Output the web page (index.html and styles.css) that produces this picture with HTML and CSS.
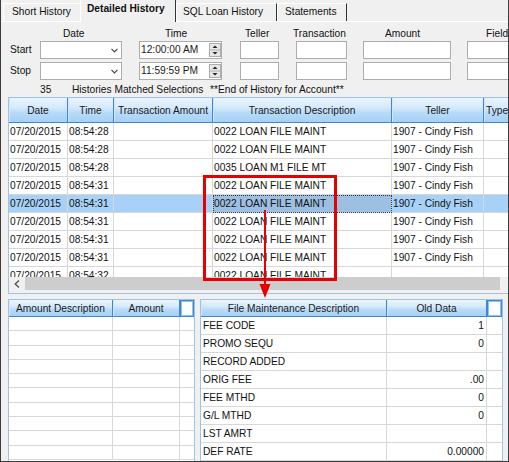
FILE: index.html
```html
<!DOCTYPE html>
<html>
<head>
<meta charset="utf-8">
<title>Detailed History</title>
<link rel="stylesheet" href="styles.css">
</head>
<body>
<div class="frame">
  <div class="tabs">
    <div class="tab tab-short">Short History</div>
    <div class="tab tab-active">Detailed History</div>
    <div class="tab tab-sql">SQL Loan History</div>
    <div class="tab tab-stmt">Statements</div>
  </div>
  <div class="page">
    <div class="filters">
      <div></div>
      <div class="flabel lbl-date">Date</div>
      <div class="flabel lbl-time">Time</div>
      <div class="flabel lbl-teller">Teller</div>
      <div class="flabel lbl-trans">Transaction</div>
      <div class="flabel lbl-amount">Amount</div>
      <div class="flabel lbl-field">Field</div>

      <div class="rlabel">Start</div>
      <div class="inp combo w-date"><svg class="chev" width="7" height="5" viewBox="0 0 7 5"><polyline points="0.5,0.8 3.5,3.8 6.5,0.8" fill="none" stroke="#444" stroke-width="1.2"/></svg></div>
      <div class="inp timebox w-time"><span class="tval">12:00:00 AM</span><svg class="spin" width="12" height="14" viewBox="0 0 12 14"><rect x="0.5" y="0.5" width="11" height="13" fill="#e6e6e6" stroke="#adadad"/><line x1="1" y1="7" x2="11" y2="7" stroke="#adadad"/><polygon points="3.5,5 8.5,5 6,2.5" fill="#222"/><polygon points="3.5,9 8.5,9 6,11.5" fill="#222"/></svg></div>
      <div class="inp w-teller"></div>
      <div class="inp w-trans"></div>
      <div class="inp w-amount"></div>
      <div class="inp w-field"></div>

      <div class="rlabel">Stop</div>
      <div class="inp combo w-date"><svg class="chev" width="7" height="5" viewBox="0 0 7 5"><polyline points="0.5,0.8 3.5,3.8 6.5,0.8" fill="none" stroke="#444" stroke-width="1.2"/></svg></div>
      <div class="inp timebox w-time"><span class="tval">11:59:59 PM</span><svg class="spin" width="12" height="14" viewBox="0 0 12 14"><rect x="0.5" y="0.5" width="11" height="13" fill="#e6e6e6" stroke="#adadad"/><line x1="1" y1="7" x2="11" y2="7" stroke="#adadad"/><polygon points="3.5,5 8.5,5 6,2.5" fill="#222"/><polygon points="3.5,9 8.5,9 6,11.5" fill="#222"/></svg></div>
      <div class="inp w-teller"></div>
      <div class="inp w-trans"></div>
      <div class="inp w-amount"></div>
      <div class="inp w-field"></div>
    </div>

    <div class="summary">
      <span class="count">35</span>
      <span class="matched">Histories Matched Selections</span>
      <span class="endmsg">**End of History for Account**</span>
    </div>

    <div class="mgrid">
      <div class="mhead">
        <div class="hc">Date</div>
        <div class="hc">Time</div>
        <div class="hc">Transaction Amount</div>
        <div class="hc">Transaction Description</div>
        <div class="hc">Teller</div>
        <div class="hc hc-left">Type</div>
      </div>
      <div class="mbody">
        <div class="mrow"><div>07/20/2015</div><div>08:54:28</div><div></div><div>0022 LOAN FILE MAINT</div><div>1907 - Cindy Fish</div><div></div></div>
        <div class="mrow"><div>07/20/2015</div><div>08:54:28</div><div></div><div>0022 LOAN FILE MAINT</div><div>1907 - Cindy Fish</div><div></div></div>
        <div class="mrow"><div>07/20/2015</div><div>08:54:28</div><div></div><div>0035 LOAN M1 FILE MT</div><div>1907 - Cindy Fish</div><div></div></div>
        <div class="mrow"><div>07/20/2015</div><div>08:54:31</div><div></div><div>0022 LOAN FILE MAINT</div><div>1907 - Cindy Fish</div><div></div></div>
        <div class="mrow sel"><div>07/20/2015</div><div>08:54:31</div><div></div><div class="focus">0022 LOAN FILE MAINT</div><div>1907 - Cindy Fish</div><div></div></div>
        <div class="mrow"><div>07/20/2015</div><div>08:54:31</div><div></div><div>0022 LOAN FILE MAINT</div><div>1907 - Cindy Fish</div><div></div></div>
        <div class="mrow"><div>07/20/2015</div><div>08:54:31</div><div></div><div>0022 LOAN FILE MAINT</div><div>1907 - Cindy Fish</div><div></div></div>
        <div class="mrow"><div>07/20/2015</div><div>08:54:31</div><div></div><div>0022 LOAN FILE MAINT</div><div>1907 - Cindy Fish</div><div></div></div>
        <div class="mrow"><div>07/20/2015</div><div>08:54:32</div><div></div><div>0022 LOAN FILE MAINT</div><div></div><div></div></div>
      </div>
      <div class="hscroll">
        <div class="sarrow"><svg width="6" height="8" viewBox="0 0 6 8"><polyline points="5,0.5 1.2,4 5,7.5" fill="none" stroke="#555" stroke-width="1.4"/></svg></div>
        <div class="thumb"></div>
      </div>
    </div>

    <div class="bottom">
      <div class="bgrid lgrid">
        <div class="bhead">
          <div class="hc">Amount Description</div>
          <div class="hc">Amount</div>
          <div class="hsmall"></div>
        </div>
        <div class="lrow"><div></div><div></div><div></div></div>
        <div class="lrow"><div></div><div></div><div></div></div>
        <div class="lrow"><div></div><div></div><div></div></div>
        <div class="lrow"><div></div><div></div><div></div></div>
        <div class="lrow"><div></div><div></div><div></div></div>
        <div class="lrow"><div></div><div></div><div></div></div>
        <div class="lrow"><div></div><div></div><div></div></div>
        <div class="lrow"><div></div><div></div><div></div></div>
        <div class="lrow"><div></div><div></div><div></div></div>
        <div class="lrow"><div></div><div></div><div></div></div>
      </div>
      <div class="bgrid rgrid">
        <div class="bhead">
          <div class="hc">File Maintenance Description</div>
          <div class="hc">Old Data</div>
          <div class="hsmall"></div>
        </div>
        <div class="rrow"><div>FEE CODE</div><div class="num">1</div><div></div></div>
        <div class="rrow"><div>PROMO SEQU</div><div class="num">0</div><div></div></div>
        <div class="rrow"><div>RECORD ADDED</div><div class="num"></div><div></div></div>
        <div class="rrow"><div>ORIG FEE</div><div class="num">.00</div><div></div></div>
        <div class="rrow"><div>FEE MTHD</div><div class="num">0</div><div></div></div>
        <div class="rrow"><div>G/L MTHD</div><div class="num">0</div><div></div></div>
        <div class="rrow"><div>LST AMRT</div><div class="num"></div><div></div></div>
        <div class="rrow"><div>DEF RATE</div><div class="num">0.00000</div><div></div></div>
      </div>
    </div>
  </div>

  <div class="redbox"></div>
  <svg class="arrow" width="13" height="89" viewBox="0 0 13 89"><line x1="6" y1="0" x2="6" y2="76" stroke="#e60000" stroke-width="2"/><polygon points="0.5,74 11.5,74 6,88" fill="#e60000"/></svg>
</div>
</body>
</html>
```

FILE: styles.css
```css
* { box-sizing: border-box; }
html, body { margin: 0; padding: 0; }
body {
  width: 509px;
  height: 462px;
  overflow: hidden;
  background: #f0f0f0;
  font-family: "Liberation Sans", Arial, sans-serif;
  font-size: 10.2px;
  color: #111;
}
.frame {
  position: relative;
  width: 509px;
  height: 462px;
  border-left: 1px solid #3c3c3c;
  border-right: 1px solid #3c3c3c;
  border-bottom: 1px solid #3c3c3c;
  overflow: hidden;
  background: #f0f0f0;
}

/* tabs */
.tabs {
  display: flex;
  align-items: flex-end;
  height: 21px;
  padding-left: 2px;
  position: relative;
  z-index: 2;
}
.tab {
  height: 18px;
  border-top: 1px solid #fff;
  border-left: 1px solid #fff;
  border-right: 1px solid #333;
  line-height: 15px;
  white-space: nowrap;
  background: #f0f0f0;
}
.tab-short { width: 77px; padding-left: 8px; border-right: none; }
.tab-active {
  width: 96px;
  height: 22px;
  margin-bottom: -1px;
  padding-left: 6px;
  font-weight: bold;
  line-height: 18px;
  border-top: none;
}
.tab-sql { width: 101px; padding-left: 6px; }
.tab-stmt { width: 70px; padding-left: 7px; }

.page { border-top: 1px solid #fff; }

/* filters */
.filters {
  display: grid;
  grid-template-columns: 39px 99px 101px 56px 67px 104px 80px;
  grid-template-rows: 15px 21px 18px;
  padding-top: 4px;
}
.flabel { line-height: 15px; white-space: nowrap; }
.lbl-date { padding-left: 23px; }
.lbl-time { padding-left: 26px; }
.lbl-teller { padding-left: 5px; }
.lbl-trans { margin-left: -3px; }
.lbl-amount { padding-left: 22px; }
.lbl-field { padding-left: 19px; }
.rlabel { padding-left: 9px; line-height: 18px; }
.inp {
  height: 18px;
  background: #fff;
  border: 1px solid #acacac;
}
.w-date { width: 82px; }
.w-time { width: 83px; }
.w-teller { width: 39px; }
.w-trans { width: 51px; }
.w-amount { width: 88px; }
.w-field { width: 60px; }
.combo {
  display: flex;
  align-items: center;
  justify-content: flex-end;
  padding-right: 3px;
  padding-top: 1px;
}
.timebox {
  display: flex;
  align-items: center;
  justify-content: space-between;
  padding-left: 1px;
  padding-right: 0;
  color: #1a1a1a;
}
.tval { line-height: 16px; }
.spin { display: block; }

/* summary */
.summary {
  display: flex;
  height: 17px;
  line-height: 19px;
  padding-left: 39px;
  white-space: nowrap;
}
.count { width: 32px; }
.matched { width: 138px; }

/* main grid */
.mgrid {
  margin-left: 7px;
  width: 545px;
  border: 1px solid #9dc4e8;
  background: #fff;
}
.mhead, .mrow {
  display: grid;
  grid-template-columns: 59px 46px 99px 179px 92px 64px;
}
.mhead { height: 25px; }
.hc {
  background: linear-gradient(to bottom, #eaf4fd 0%, #d6eafb 40%, #b8dbf8 60%, #a6d0f5 100%);
  border-right: 1px solid #3d87d6;
  border-bottom: 1px solid #3d87d6;
  box-shadow: inset 1px 0 0 #d0e6fa;
  text-align: center;
  white-space: nowrap;
  overflow: hidden;
  display: flex;
  align-items: center;
  justify-content: center;
  color: #1a1a1a;
}
.hc-left { justify-content: flex-start; padding-left: 2px; }
.mbody { height: 154px; overflow: hidden; }
.mrow { height: 18px; }
.mrow > div {
  border-right: 1px solid #d7d7d7;
  border-bottom: 1px solid #d7d7d7;
  padding-left: 1px;
  line-height: 17px;
  white-space: nowrap;
  overflow: hidden;
}
.sel > div { background: #a8d1f7; }
.sel > div.focus {
  background: #9dbfe2;
  outline: 1px dotted #2a3a50;
  outline-offset: -1px;
}
.hscroll {
  display: flex;
  height: 16px;
  background: #f0f0f0;
}
.sarrow {
  width: 16px;
  display: flex;
  align-items: center;
  justify-content: center;
  padding-bottom: 3px;
}
.thumb {
  width: 475px;
  height: 13px;
  background: #cdcdcd;
}

/* bottom grids */
.bottom {
  display: flex;
  gap: 5px;
  margin-left: 7px;
  margin-top: 5px;
}
.bgrid {
  border: 1px solid #9dc4e8;
  background: #fff;
  height: 200px;
}
.lgrid { width: 187px; }
.rgrid { width: 303px; }
.bhead { display: grid; height: 17px; }
.lgrid .bhead, .lrow { display: grid; grid-template-columns: 104px 67px 14px; }
.rgrid .bhead, .rrow { display: grid; grid-template-columns: 186px 100px 15px; }
.hsmall {
  background: #fdfeff;
  border: 1px solid #3d87d6;
  box-shadow: inset 0 0 0 1px #8fc2ef;
}
.lrow { height: 14.3px; }
.lrow > div, .rrow > div {
  border-right: 1px solid #d7d7d7;
  border-bottom: 1px solid #d7d7d7;
}
.lrow > div:last-child, .rrow > div:last-child { border-right: none; }
.rrow { height: 18px; }
.rrow > div {
  line-height: 17px;
  padding-left: 2px;
  white-space: nowrap;
  overflow: hidden;
}
.rrow > div.num { text-align: right; padding-right: 2px; }

/* annotation overlay */
.redbox {
  position: absolute;
  left: 202px;
  top: 175px;
  width: 134px;
  height: 106px;
  border: 3px solid #e60000;
  z-index: 5;
}
.arrow {
  position: absolute;
  left: 258px;
  top: 210px;
  z-index: 6;
}
```
